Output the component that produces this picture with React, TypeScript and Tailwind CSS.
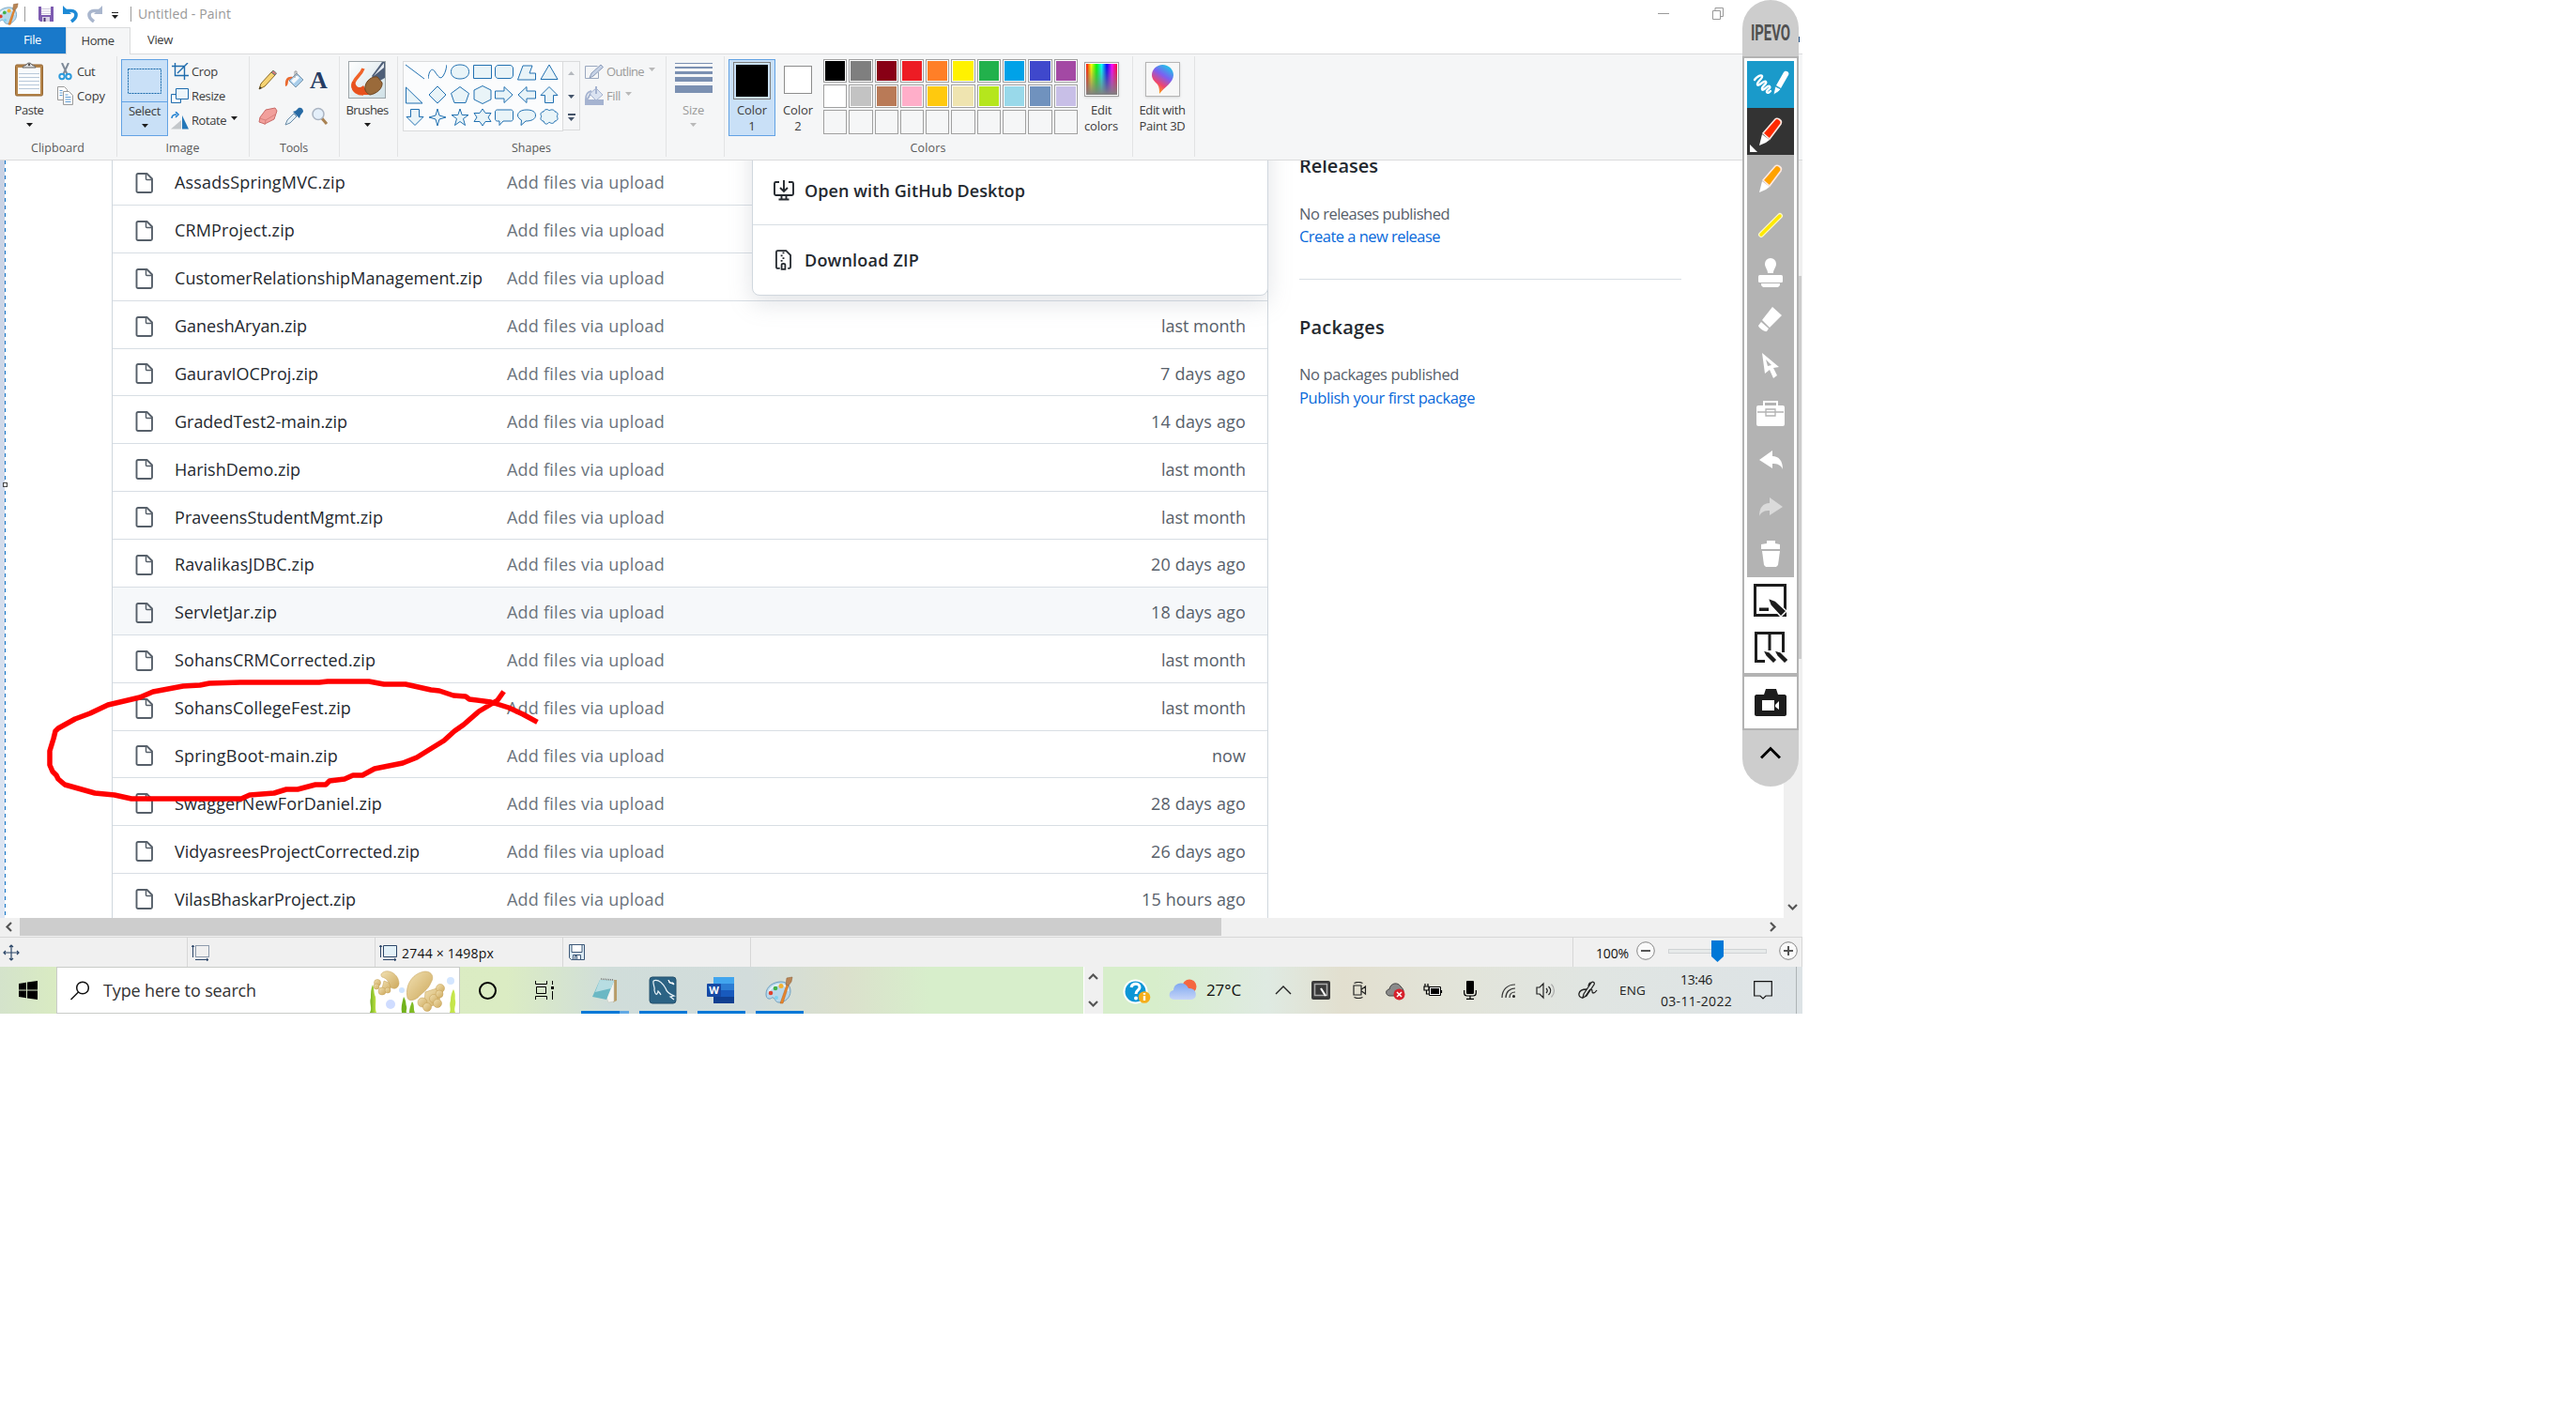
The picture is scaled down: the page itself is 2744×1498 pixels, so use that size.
import React, { useLayoutEffect, useRef, useState } from 'react';

type LabelProps = { w?: number; className?: string; children: string };

/* Single-line text whose letter spacing is adjusted so it spans `w` pixels. */
function Label({ w, className = '', children }: LabelProps) {
  const ref = useRef<HTMLSpanElement>(null);
  const [spacing, setSpacing] = useState(0);
  useLayoutEffect(() => {
    if (!ref.current || !w) return;
    const natural = ref.current.getBoundingClientRect().width;
    setSpacing((w - natural) / children.length);
  }, [w, children]);
  return (
    <span ref={ref} className={`inline-block whitespace-nowrap ${className}`} style={{ letterSpacing: spacing }}>
      {children}
    </span>
  );
}

const Caret = ({ className = 'text-[#1e1e1e]' }: { className?: string }) => (
  <svg width="7" height="4" viewBox="0 0 7 4" className={className}>
    <path d="M0 0h7L3.5 4z" fill="currentColor" />
  </svg>
);

/* ------------------------------------------------------------------ */
/* Title bar                                                           */
/* ------------------------------------------------------------------ */

const PaletteIcon = ({ size }: { size: number }) => (
  <svg width={size} height={size} viewBox="0 0 30 30">
    <path d="M1 19C1 11 9 6 17 6c6 0 10 4 10 10 0 7-6 12-12 12-4 0-4-3-6-5-2-1-3 2-5 1-2 0-3-2-3-5z" fill="#b9d8ea" stroke="#6f9fc0" strokeWidth="1" />
    <path d="M4 18c1-6 7-9 13-9 4 0 7 3 7 7" fill="none" stroke="#e6f4fb" strokeWidth="2" />
    <circle cx="6" cy="18" r="2.3" fill="#e0402e" />
    <circle cx="11" cy="13" r="2.3" fill="#43b049" />
    <circle cx="17" cy="10.500" r="2.500" fill="#f2b233" />
    <circle cx="12" cy="23" r="2" fill="#7fd2f0" />
    <path d="M16 29l7-20 2 1-6 19z" fill="#e8862c" stroke="#b7611a" strokeWidth=".5" />
    <path d="M22 9l1-7 6-1-1 5-3 4z" fill="#b98555" stroke="#8d5f35" strokeWidth=".5" />
  </svg>
);

function TitleBar() {
  return (
    <div className="flex h-[29px] items-center bg-white">
      <div className="flex h-full w-[26px] items-center"><div className="-ml-1"><PaletteIcon size={24} /></div></div>
      <div className="h-4 w-px bg-[#9b9b9b]" />
      <svg className="ml-[14px]" width="16" height="16" viewBox="0 0 16 16">
        <path d="M0 0h16v16H2l-2-2z" fill="#7d5bb0" />
        <path d="M3 0h10v9H3z" fill="#fff" />
        <path d="M3 2.500h10M3 5h10M3 7.500h10" stroke="#cfc7dd" />
        <path d="M4 11h8v5H4z" fill="#d9d2e6" /><path d="M5.500 12h2v4h-2z" fill="#4b3474" />
      </svg>
      <svg className="ml-[10px]" width="16" height="18" viewBox="0 0 16 18">
        <path d="M2 5.500h7c3 0 5 2 5 4.500 0 3-2 5-5 7" fill="none" stroke="#1e8ad6" strokeWidth="3.600" />
        <path d="M0 0v9h9z" fill="#1e8ad6" />
      </svg>
      <svg className="ml-[10px]" width="16" height="18" viewBox="0 0 16 18">
        <path d="M14 5.500H7C4 5.500 2 7.500 2 10c0 3 2 5 5 7" fill="none" stroke="#a9b6cd" strokeWidth="3.600" />
        <path d="M16 0v9H7z" fill="#a9b6cd" />
      </svg>
      <div className="ml-[10px] mt-1 flex flex-col items-center gap-[2px]"><div className="h-px w-[7px] bg-[#222]" /><Caret /></div>
      <div className="ml-[13px] h-4 w-px bg-[#9b9b9b]" />
      <Label w={99} className="ml-[7px] text-[14px] leading-[29px] text-[#999999]">Untitled - Paint</Label>
      <div className="ml-[1520px] h-px w-[12px] bg-[#999]" />
      <svg className="ml-[46px]" width="12" height="13" viewBox="0 0 12 13" fill="none" stroke="#999">
        <path d="M.5 3.500h8v9h-8zM3 3V.500h8.500v9H9" />
      </svg>
    </div>
  );
}

function Tabs() {
  return (
    <div className="flex h-[29px] border-b border-[#dadbdc] bg-white">
      <div className="flex w-[70px] items-center justify-center bg-[#1979ca] pr-px text-[13px] text-white"><Label w={19}>File</Label></div>
      <div className="-mb-px flex h-[29px] w-[69px] items-center justify-center border border-b-0 border-[#dadbdc] bg-[#f5f6f7] pr-px text-[13px] text-[#3c3c3c]"><Label w={35}>Home</Label></div>
      <div className="flex w-[63px] items-center justify-center text-[13px] text-[#3c3c3c]"><Label w={27}>View</Label></div>
    </div>
  );
}

/* ------------------------------------------------------------------ */
/* Ribbon                                                              */
/* ------------------------------------------------------------------ */

function Group({ width, label, labelWidth, children }: { width: string; label?: string; labelWidth?: number; children: React.ReactNode }) {
  return (
    <div className={`flex shrink-0 flex-col pt-[2px] ${width}`}>
      <div className="flex h-[107px] flex-col border-r border-[#e2e3e4]">
        <div className="-mt-[2px] flex h-[93px]">{children}</div>
        <div className="pr-px text-center text-[12.500px] leading-[18px] text-[#5a5a5a]">{label && <Label w={labelWidth}>{label}</Label>}</div>
      </div>
    </div>
  );
}

const ribbonText = 'text-[13px] leading-[17px] text-[#3c3c3c]';

function ClipboardGroup() {
  return (
    <Group width="w-[125px]" label="Clipboard" labelWidth={57}>
      <div className="ml-[11px] flex w-10 flex-col items-center pt-[8px]">
        <svg width="32" height="38" viewBox="0 0 32 38">
          <rect x="1.500" y="3" width="29" height="33" rx="1.500" fill="#b5854a" stroke="#946530" />
          <path d="M4 6h24v28H4z" fill="#f9fbfd" />
          <path d="M5 12.500h22M5 16.500h22M5 20.500h22M5 24.500h22M5 28.500h22" stroke="#b9c9da" />
          <path d="M9 6c0-2 3-2 4-3 1-2.500 5-2.500 6 0 1 1 4 1 4 3z" fill="#e4e4e4" stroke="#5b5b5b" />
          <circle cx="16" cy="3" r="1.300" fill="#555" />
        </svg>
        <Label w={31} className={`mt-[5px] ${ribbonText}`}>Paste</Label>
        <div className="mt-[5px]"><Caret /></div>
      </div>
      <div className="flex flex-col pl-[10px] pt-[5px]">
        <div className="flex h-[26px] items-center gap-[4px]">
          <svg width="17" height="19" viewBox="0 0 17 19">
            <path d="M5 0l5.500 12M12 0L6.500 12" stroke="#7f8b99" strokeWidth="2" />
            <circle cx="5" cy="14.500" r="2.700" fill="none" stroke="#2e9bdc" strokeWidth="2" />
            <circle cx="12" cy="14.500" r="2.700" fill="none" stroke="#2e9bdc" strokeWidth="2" />
          </svg>
          <Label w={19} className={ribbonText}>Cut</Label>
        </div>
        <div className="flex h-[26px] items-center gap-[4px]">
          <svg width="17" height="20" viewBox="0 0 17 20" fill="#fff" stroke="#9a9a9a">
            <path d="M.500.500h7l3 3v11H.500z" /><path d="M6.500 5.500h6l4 4v10h-10z" />
            <path d="M2.500 4.500h3M2.500 7h3M2.500 9.500h3M8.500 9h3M8.500 11.500h6M8.500 14h6M8.500 16.500h6" stroke="#5b9bd5" />
          </svg>
          <Label w={30} className={ribbonText}>Copy</Label>
        </div>
      </div>
    </Group>
  );
}

function ImageGroup() {
  return (
    <Group width="w-[141px]" label="Image" labelWidth={36}>
      <div className="ml-1 mt-[5px] flex h-[82px] w-[50px] flex-col items-center border border-[#62a2e4] bg-[#c9e0f7]">
        <div className="flex h-[45px] w-full items-center justify-center border-b border-[#62a2e4]">
          <svg width="36" height="27" viewBox="0 0 36 27"><rect x=".5" y=".5" width="35" height="26" fill="none" stroke="#1467a8" strokeDasharray="2 1" /></svg>
        </div>
        <Label w={34} className={`mt-px ${ribbonText}`}>Select</Label>
        <div className="mt-[5px]"><Caret /></div>
      </div>
      <div className="flex flex-col pl-[3px] pt-[5px]">
        <div className="flex h-[26px] items-center gap-[3px]">
          <svg width="19" height="18" viewBox="0 0 19 18" fill="none" stroke="#1f6cad" strokeWidth="1.400"><path d="M4.500 0v13.500H19M1 3.500h13.500V18M7 11l8-8 3-3" /></svg>
          <Label w={28} className={ribbonText}>Crop</Label>
        </div>
        <div className="flex h-[26px] items-center gap-[3px]">
          <svg width="19" height="18" viewBox="0 0 19 18" fill="#fff" stroke="#1f6cad"><path d="M.5 7.500h10v9H.5z" /><path d="M5.500 1.500h13v11h-13z" fill="#eef6fb" /></svg>
          <Label w={36} className={ribbonText}>Resize</Label>
        </div>
        <div className="flex h-[26px] items-center gap-[3px]">
          <svg width="19" height="19" viewBox="0 0 19 19"><path d="M0 18.500L11 9v9.500z" fill="#c3c7ca" /><path d="M12 4l7 14.500h-7z" fill="#2477b8" /><path d="M1 7c0-3 2-4 5-4M5 0l3 3-3 3" fill="none" stroke="#1f7fd0" strokeWidth="1.500" /></svg>
          <Label w={37} className={ribbonText}>Rotate</Label>
          <div className="ml-[2px] -mt-[4px]"><Caret /></div>
        </div>
      </div>
    </Group>
  );
}

function ToolsGroup() {
  return (
    <Group width="w-[96px]" label="Tools" labelWidth={30}>
      <div className="ml-[9px] mt-[17px] grid h-[60px] grid-cols-[28px_28px_20px] gap-y-[15px]">
        <svg width="20" height="21" viewBox="0 0 20 21"><path d="M1 20l2-6L14 2l4 3L7 17z" fill="#f6d373" stroke="#8a6a26" /><path d="M14 2l2-2 3.500 3L18 5z" fill="#d9777c" stroke="#6c7d6c" /><path d="M1 20l1-3 2 2z" fill="#333" /></svg>
        <svg width="21" height="21" viewBox="0 0 21 21"><path d="M5 11l8-8 7 7-8 8z" fill="#a8cdea" stroke="#7c97ad" /><path d="M7 11l6-6 3 3-6 6z" fill="#f5fafd" /><path d="M11 8V1h2v5" fill="none" stroke="#999" /><path d="M9 7c-5-1-9 1-8 10 2 0 3-3 3-6z" fill="#ea6a30" /></svg>
        <div className="-ml-px font-['Liberation_Serif'] text-[26px] font-bold leading-[22px] text-[#263c63]">A</div>
        <svg width="21" height="20" viewBox="0 0 21 20"><path d="M8 3l10-2 2 3-3 9-10 5-6-2 1-5z" fill="#f2a09c" stroke="#c96b68" /><path d="M1 12l7 2-1 5M8 14l10-6" fill="none" stroke="#d9817d" /></svg>
        <svg width="20" height="20" viewBox="0 0 20 20"><path d="M1 19l2-5 7-7 3 3-7 7z" fill="#e5f0f7" stroke="#688aa6" /><path d="M9 5l7 7 1-3 3-4c0-3-2-5-5-4l-3 3z" fill="#276aa4" /></svg>
        <svg width="20" height="20" viewBox="0 0 20 20"><path d="M11 11l6 7" stroke="#a98253" strokeWidth="3" /><circle cx="8" cy="7.500" r="6" fill="#e4effa" stroke="#aab4c2" strokeWidth="1.500" /></svg>
      </div>
    </Group>
  );
}

function BrushesGroup() {
  return (
    <Group width="w-[62px]">
      <div className="ml-[4px] flex w-[50px] flex-col items-center pt-[7px]">
        <svg width="40" height="40" viewBox="0 0 40 40">
          <defs><linearGradient id="brushBg" x1="0" y1="0" x2="1" y2="1"><stop offset="0" stopColor="#fff" /><stop offset="1" stopColor="#cfe0e6" /></linearGradient></defs>
          <rect x=".5" y=".5" width="39" height="39" fill="url(#brushBg)" stroke="#9da5a9" />
          <path d="M25 16L36 1h3v17l-9 5z" fill="#4f5f78" /><path d="M27 16L38 2v5z" fill="#e6ecf3" />
          <path d="M16 8C13 16 6 18 5 26c0 6 5 9 11 9" fill="none" stroke="#f0632a" strokeWidth="3.500" />
          <path d="M4 22c-3 8 3 14 12 14h6l-6-10c-4 4-8 2-9-4z" fill="#e8521f" />
          <path d="M18 27c1-6 7-11 13-10l5 6c1 6-6 12-13 13-4-2-6-5-5-9z" fill="#9a6a3a" stroke="#6e4722" />
        </svg>
        <Label w={45} className={`mt-[4px] ${ribbonText}`}>Brushes</Label>
        <div className="mt-[5px]"><Caret /></div>
      </div>
    </Group>
  );
}

/* Each shape is drawn in a 20 x 20 cell. */
const shapePaths = [
  'M0 2L20 17',
  'M0 17C1 8 4 5 7 9c4 6 6 9 9 5 3-5 3-7 4-12',
  'M10 2C4 2 .500 5 .500 9.500S4 17 10 17s9.500-3 9.500-7.500S16 2 10 2z',
  'M.500 2.500h19v14H.500z',
  'M4 2.500h12c2 0 3.500 1.500 3.500 3.500v7c0 2-1.500 3.500-3.500 3.500H4C2 16.500.500 15 .500 13V6C.500 4 2 2.500 4 2.500z',
  'M6 3h10l-3 8h6.500v7H.500z',
  'M10 2l9 15.500H1z',
  'M.500 2v17H18z',
  'M10 1l9 9-9 9-9-9z',
  'M10 1.500l9.500 7-3.500 10H4L.500 8.500z',
  'M10 .500L19 5v10l-9 4.500L1 15V5z',
  'M.500 6H10V1.500l9 8.500-9 8.500V14H.500z',
  'M19.500 6H10V1.500L1 10l9 8.500V14h9.500z',
  'M10 1.500l9 9h-4.500v8h-9v-8H1z',
  'M5.500 1.500h9v8H19l-9 9-9-9h4.500z',
  'M10 1l2 7 7 2-7 2-2 7-2-7-7-2 7-2z',
  'M10 1l2.200 6.500H19l-5.500 4L15.500 18.500 10 14.500l-5.500 4 2-7L1 7.500h6.800z',
  'M10 1l3 4.500h6L16 10l3 4.500h-6L10 19l-3-4.500H1L4 10 1 5.500h6z',
  'M2.500 2h15c1 0 2 1 2 2v8c0 1-1 2-2 2H9l-4 4.500V14H2.500c-1 0-2-1-2-2V4c0-1 1-2 2-2z',
  'M10 2C4 2 .500 4.500 .500 8c0 2 2 4 4 5l-.500 5.500L9 14c6 0 10.500-2 10.500-6S16 2 10 2z',
  'M4 4c1-3 5-3 6-1 2-2 6-1 6 1 3 0 4 3 2 5 2 2 1 5-2 5-1 3-4 3-6 1-1 2-4 3-5 1l-1-2c-3 0-4-3-2-5-2-2-1-5 2-5z',
];

function ShapesGroup() {
  return (
    <Group width="w-[286px]" label="Shapes" labelWidth={42}>
      <div className="ml-[5px] mt-[7px] flex h-[75px]">
        <div className="grid w-[171px] grid-cols-7 content-start justify-items-start gap-y-[4px] border border-[#dadbdc] bg-[#fbfcfd] pl-[2px] pt-[1px]">
          {shapePaths.map((d, i) => (
            <svg key={i} width="20" height="20" viewBox="0 0 20 20" fill={i < 2 ? 'none' : '#e9f4f8'} stroke="#2271b1" strokeWidth="1"><path d={d} /></svg>
          ))}
        </div>
        <div className="flex h-[74px] w-[18px] flex-col items-center border border-l-0 border-[#dadbdc] pt-[10px]">
          <div className="rotate-180"><Caret className="text-[#b4b8bd]" /></div>
          <div className="mt-[21px]"><Caret className="text-[#44546a]" /></div>
          <div className="mt-[16px] flex flex-col items-center gap-[2px]"><div className="h-[2px] w-2 bg-[#44546a]" /><Caret className="text-[#44546a]" /></div>
        </div>
      </div>
      <div className="ml-[5px] flex flex-col pt-[5px]">
        <div className="flex h-[26px] items-center gap-[3px]">
          <svg width="20" height="17" viewBox="0 0 20 17"><path d="M.5 2.500h13M.5 2.500v13h14V9" fill="none" stroke="#9aa8bf" /><path d="M5 15l2-5L17 1l2.500 2.500L9 13z" fill="#c6d2e6" stroke="#8b9bb8" /></svg>
          <Label w={40} className="text-[13px] leading-[17px] text-[#9a9a9a]">Outline</Label>
          <div className="ml-[2px] -mt-[4px]"><Caret className="text-[#b9b9b9]" /></div>
        </div>
        <div className="flex h-[26px] items-center gap-[3px]">
          <svg width="20" height="20" viewBox="0 0 20 20"><path d="M0 14h20v6H0z" fill="#a5b3d0" /><path d="M5 8l7-6 7 7-7 6z" fill="#dbe3f1" stroke="#a5b3d0" /><path d="M7 5c-5 1-6 4-6 9 3 0 3-4 5-6M12 8V0" fill="none" stroke="#a5b3d0" strokeWidth="2" /></svg>
          <Label w={15} className="text-[13px] leading-[17px] text-[#9a9a9a]">Fill</Label>
          <div className="ml-[2px] -mt-[4px]"><Caret className="text-[#b9b9b9]" /></div>
        </div>
      </div>
    </Group>
  );
}

function SizeGroup() {
  return (
    <Group width="w-[62px]">
      <div className="-ml-[2px] flex w-full flex-col items-center pt-[9px]">
        <div className="h-px w-10 bg-[#7b90b2]" />
        <div className="mt-[3px] h-[2px] w-10 bg-[#7b90b2]" />
        <div className="mt-[3px] h-[3px] w-10 bg-[#7b90b2]" />
        <div className="mt-[3px] h-[5px] w-10 bg-[#7b90b2]" />
        <div className="mt-[4px] h-[8px] w-10 bg-[#7b90b2]" />
        <Label w={23} className="mt-[10px] text-[13px] leading-[17px] text-[#9a9a9a]">Size</Label>
        <div className="mt-[5px]"><Caret className="text-[#b9b9b9]" /></div>
      </div>
    </Group>
  );
}

const palette = [
  'bg-black', 'bg-[#7f7f7f]', 'bg-[#880015]', 'bg-[#ed1c24]', 'bg-[#ff7f27]', 'bg-[#fff200]', 'bg-[#22b14c]', 'bg-[#00a2e8]', 'bg-[#3f48cc]', 'bg-[#a349a4]',
  'bg-white', 'bg-[#c3c3c3]', 'bg-[#b97a57]', 'bg-[#ffaec9]', 'bg-[#ffc90e]', 'bg-[#efe4b0]', 'bg-[#b5e61d]', 'bg-[#99d9ea]', 'bg-[#7092be]', 'bg-[#c8bfe7]',
];

function ColorsGroup() {
  return (
    <Group width="w-[435px]" label="Colors" labelWidth={38}>
      <div className="ml-[4px] mt-[5px] flex h-[82px] w-[50px] flex-col items-center border border-[#62a2e4] bg-[#c9e0f7] pt-[2px]">
        <div className="h-10 w-10 border border-[#7f7f7f] p-[2px]"><div className="h-full w-full bg-black" /></div>
        <Label w={32} className={`mt-[3px] ${ribbonText}`}>Color</Label>
        <Label className={ribbonText}>1</Label>
      </div>
      <div className="flex w-[48px] flex-col items-center pt-[12px]">
        <div className="h-[30px] w-[30px] border border-[#8d8d8d] bg-white" />
        <Label w={32} className={`mt-[9px] ${ribbonText}`}>Color</Label>
        <Label className={ribbonText}>2</Label>
      </div>
      <div className="ml-[3px] mt-[5px] grid h-[80px] w-[271px] grid-cols-10 gap-x-[2px] gap-y-[2px]">
        {palette.map((c) => (
          <div key={c} className="h-[25px] border border-[#a0a0a0] bg-white p-px"><div className={`h-full w-full ${c}`} /></div>
        ))}
        {Array.from({ length: 10 }, (_, i) => <div key={i} className="h-[26px] border border-[#a0a0a0] bg-[#f5f6f7]" />)}
      </div>
      <div className="flex w-[50px] flex-col items-center pt-[8px]">
        <div className="h-[37px] w-[37px] border border-[#a0a0a0] bg-white p-px shadow-sm">
          <div className="h-full w-full bg-[linear-gradient(to_right,#f00,#ff0,#0f0,#0ff,#00f,#f0f,#f03)]"><div className="h-full w-full bg-[linear-gradient(to_bottom,transparent,#808080)]" /></div>
        </div>
        <Label w={22} className={`mt-[6px] ${ribbonText}`}>Edit</Label>
        <Label w={36} className={ribbonText}>colors</Label>
      </div>
    </Group>
  );
}

function Paint3DGroup() {
  return (
    <Group width="w-[66px]">
      <div className="-ml-[2px] flex w-[66px] flex-col items-center pt-[8px]">
        <div className="flex h-[37px] w-[37px] items-center justify-center border border-[#b5b5b5] bg-[#f7f7f7] shadow-sm">
          <svg width="23" height="31" viewBox="0 0 23 31">
            <defs>
              <linearGradient id="p3d" x1=".8" y1="0" x2=".3" y2="1"><stop offset="0" stopColor="#12d2e8" /><stop offset=".4" stopColor="#7d5ff0" /><stop offset=".7" stopColor="#ee4470" /><stop offset="1" stopColor="#ffb000" /></linearGradient>
            </defs>
            <path d="M11.500 0C18 0 23 5 23 11c0 8-10 13-15 20 0-4 0-7-2-10-3-3-6-6-6-10C0 5 5 0 11.500 0z" fill="url(#p3d)" />
          </svg>
        </div>
        <Label w={49} className={`mt-[6px] ${ribbonText}`}>Edit with</Label>
        <Label w={49} className={ribbonText}>Paint 3D</Label>
      </div>
    </Group>
  );
}

function Ribbon() {
  return (
    <div className="flex h-[113px] border-b border-[#dadbdc] bg-[#f5f6f7]">
      <ClipboardGroup /><ImageGroup /><ToolsGroup /><BrushesGroup /><ShapesGroup /><SizeGroup /><ColorsGroup /><Paint3DGroup />
    </div>
  );
}

/* ------------------------------------------------------------------ */
/* Canvas with the repository page                                     */
/* ------------------------------------------------------------------ */

type FileRow = { name: string; w: number; age: string; aw: number; hover?: boolean };

const files: FileRow[] = [
  { name: 'AssadsSpringMVC.zip', w: 182, age: '', aw: 0 },
  { name: 'CRMProject.zip', w: 128, age: '', aw: 0 },
  { name: 'CustomerRelationshipManagement.zip', w: 328, age: '', aw: 0 },
  { name: 'GaneshAryan.zip', w: 141, age: 'last month', aw: 90 },
  { name: 'GauravIOCProj.zip', w: 153, age: '7 days ago', aw: 91 },
  { name: 'GradedTest2-main.zip', w: 184, age: '14 days ago', aw: 101 },
  { name: 'HarishDemo.zip', w: 134, age: 'last month', aw: 90 },
  { name: 'PraveensStudentMgmt.zip', w: 222, age: 'last month', aw: 90 },
  { name: 'RavalikasJDBC.zip', w: 149, age: '20 days ago', aw: 101 },
  { name: 'ServletJar.zip', w: 109, age: '18 days ago', aw: 101, hover: true },
  { name: 'SohansCRMCorrected.zip', w: 214, age: 'last month', aw: 90 },
  { name: 'SohansCollegeFest.zip', w: 188, age: 'last month', aw: 90 },
  { name: 'SpringBoot-main.zip', w: 174, age: 'now', aw: 36 },
  { name: 'SwaggerNewForDaniel.zip', w: 221, age: '28 days ago', aw: 101 },
  { name: 'VidyasreesProjectCorrected.zip', w: 261, age: '26 days ago', aw: 101 },
  { name: 'VilasBhaskarProject.zip', w: 193, age: '15 hours ago', aw: 111 },
];

const FileIcon = () => (
  <svg width="19" height="22" viewBox="0 0 19 22" fill="none" stroke="#57606a" strokeWidth="1.900" strokeLinejoin="round">
    <path d="M3 1h9.500L18 6.500V19.500a1.500 1.500 0 0 1-1.500 1.500H3a1.500 1.500 0 0 1-1.500-1.500v-17A1.500 1.500 0 0 1 3 1z" />
    <path d="M11.500 1v5.500a1 1 0 0 0 1 1H18" strokeWidth="1.500" />
  </svg>
);

function FileTable() {
  return (
    <div className="-mt-[3px] w-[1232px] shrink-0 border-x border-[#d0d7de]">
      {files.map((f) => (
        <div key={f.name} className={`flex h-[50.880px] items-center border-b border-[#d8dee4] pl-[24px] pr-[23px] pt-[4px] text-[18px] ${f.hover ? 'bg-[#f6f8fa]' : ''}`}>
          <FileIcon />
          <div className="ml-[23px] w-[354px] text-[#24292f]"><Label w={f.w}>{f.name}</Label></div>
          <div className="flex-1 text-[#6b737c]"><Label w={168}>Add files via upload</Label></div>
          <div className="text-[#57606a]">{f.age && <Label w={f.aw}>{f.age}</Label>}</div>
        </div>
      ))}
    </div>
  );
}

function Sidebar() {
  return (
    <div className="ml-[33px] flex w-[407px] shrink-0 flex-col items-start text-[16.500px] leading-[25px] text-[#57606a]">
      <Label w={84} className="-mt-[7px] text-[20px] font-semibold text-[#24292f]">Releases</Label>
      <Label w={160} className="mt-[26px]">No releases published</Label>
      <Label w={150} className="-mt-px text-[#0969da]">Create a new release</Label>
      <div className="mt-[33px] h-px w-full bg-[#d8dee4]" />
      <Label w={91} className="mt-[38px] text-[20px] font-semibold text-[#24292f]">Packages</Label>
      <Label w={170} className="mt-[25px]">No packages published</Label>
      <Label w={187} className="text-[#0969da]">Publish your first package</Label>
    </div>
  );
}

function CodeMenu() {
  return (
    <div className="absolute left-[801px] top-[-40px] flex h-[184px] w-[550px] flex-col rounded-lg border border-[#d0d7de] bg-white text-[18px] font-semibold text-[#24292f] shadow-[0_8px_24px_rgba(140,149,159,0.25)]">
      <div className="flex h-[108px] items-center border-b border-[#d8dee4] pl-[22px] pt-[36px]">
        <svg width="22" height="22" viewBox="0 0 22 22" fill="none" stroke="#24292f" strokeWidth="1.900">
          <path d="M6 2H2.500A1.500 1.500 0 0 0 1 3.500v11A1.500 1.500 0 0 0 2.500 16h17a1.500 1.500 0 0 0 1.500-1.500v-11A1.500 1.500 0 0 0 19.500 2H16M11 0v11M7 8l4 4 4-4M8.500 16v3.500M13.500 16v3.500M5.500 20.500h11" />
        </svg>
        <Label w={235} className="ml-[11px]">Open with GitHub Desktop</Label>
      </div>
      <div className="flex h-[75px] items-center pl-[24px] pt-[1px]">
        <svg width="17" height="22" viewBox="0 0 18 23" fill="none" stroke="#24292f" strokeWidth="1.900">
          <path d="M5 21H2.500A1.500 1.500 0 0 1 1 19.500v-17A1.500 1.500 0 0 1 2.500 1H12l5 5v13.500a1.500 1.500 0 0 1-1.500 1.500H14M8 3.500h2M6 6.500h2M8 9.500h2M6 12.500h2M7 22v-5c0-2 4-2 4 0v5z" />
        </svg>
        <Label w={122} className="ml-[14px]">Download ZIP</Label>
      </div>
    </div>
  );
}

const RedStroke = () => (
  <svg className="absolute left-0 top-[540px]" width="620" height="160" viewBox="0 711 620 160" fill="none" stroke="#ff0000" strokeWidth="5.500" strokeLinejoin="round" strokeLinecap="square">
    <path d="M535 739L530 746 510 758 494 772 484 779 473 789 452 802 444 807 429 813 399 819 386 826 376 826 367 830 351 832 347 836 336 836 317 841 305 841 292 845 266 847 257 851 140 851 122 847 101 845 69 836 62 830 60 826 56 822 53 815 53 800 57 787 59 779 62 776 80 766 96 760 115 751 149 743 163 737 195 731 213 730 223 728 257 727 340 727 349 726 393 726 409 729 432 729 459 735 468 736 483 741 496 742 500 745 523 748 542 754 557 761 570 768" />
  </svg>
);

const Chevron = ({ d, className = '' }: { d: string; className?: string }) => (
  <svg className={className} width="11" height="11" viewBox="0 0 11 11" fill="none" stroke="#555" strokeWidth="2.200"><path d={d} /></svg>
);

function Workspace() {
  return (
    <div className="flex h-[807px]">
      <div className="relative flex w-[1900px] overflow-hidden bg-white">
        <div className="flex w-[119px] shrink-0">
          <div className="h-full w-[5px] bg-gradient-to-b from-[#c8d1e3] to-[#dfe7f3]" />
          <div className="h-full w-px bg-[repeating-linear-gradient(to_bottom,#0f72c4_0_4px,#fff_4px_8px)]" />
        </div>
        <FileTable />
        <Sidebar />
        <CodeMenu />
        <RedStroke />
        <div className="absolute left-[3px] top-[343px] h-[5px] w-[5px] border border-[#444] bg-white" />
      </div>
      <div className="flex w-5 flex-col items-center bg-[#f0f0f0]">
        <div className="mt-[123px] h-[408px] w-[18px] bg-[#cdcdcd]" />
        <Chevron d="M1 3l4.500 4.500L10 3" className="mt-auto mb-[6px] -ml-px" />
      </div>
    </div>
  );
}

function HorizontalScroll() {
  return (
    <div className="flex h-5 items-center bg-[#f0f0f0] pb-px">
      <Chevron d="M8 1L3.500 5.500 8 10" className="ml-[4px] mr-[6px]" />
      <div className="h-[19px] w-[1280px] bg-[#cdcdcd]" />
      <Chevron d="M3 1l4.500 4.500L3 10" className="ml-[582px]" />
    </div>
  );
}

/* ------------------------------------------------------------------ */
/* Status bar                                                          */
/* ------------------------------------------------------------------ */

const ZoomButton = ({ plus }: { plus?: boolean }) => (
  <svg width="20" height="20" viewBox="0 0 20 20"><circle cx="10" cy="10" r="9.300" fill="#fafafa" stroke="#858585" /><path d={plus ? 'M5 10h10M10 5v10' : 'M5 10h10'} stroke="#555" strokeWidth="2" /></svg>
);

function StatusBar() {
  return (
    <div className="flex h-8 border-t border-[#d7d7d7] bg-[#f0f0f0] text-[14px] text-[#111]">
      <div className="flex w-[200px] items-center border-r border-[#d7d7d7] pl-[3px]">
        <svg width="18" height="18" viewBox="0 0 18 18" fill="none" stroke="#2c4668" strokeWidth="1.200"><path d="M9 1v16M1 9h16M7 3l2-2 2 2M7 15l2 2 2-2M3 7L1 9l2 2M15 7l2 2-2 2" /></svg>
      </div>
      <div className="flex w-[200px] items-center border-r border-[#d7d7d7] pl-[4px]">
        <svg width="20" height="18" viewBox="0 0 20 18" fill="none" stroke="#2c4668"><path d="M4.500 1.500h14v12h-14z" strokeDasharray="1 1" /><path d="M1.500 1v13M0 3l1.500-2L3 3M4 16.500h14M16 15l2 1.500-2 1.500" /></svg>
      </div>
      <div className="flex w-[200px] items-center border-r border-[#d7d7d7] pl-[4px]">
        <svg width="20" height="18" viewBox="0 0 20 18" fill="none" stroke="#2c4668"><path d="M4.500 1.500h14v12h-14z" fill="#e3f1f8" /><path d="M1.500 1v13M0 3l1.500-2L3 3M4 16.500h14M16 15l2 1.500-2 1.500" /></svg>
        <Label w={98} className="ml-[4px] pt-px">2744 × 1498px</Label>
      </div>
      <div className="flex w-[200px] items-center border-r border-[#d7d7d7] pl-[6px]">
        <svg width="17" height="17" viewBox="0 0 17 17" fill="#dcebf4" stroke="#3d5878"><path d="M.5.5h16v16h-14l-2-2z" /><path d="M3 .5h11v8H3z" fill="#fff" /><path d="M4.500 11.500h8v5h-8z" fill="#fff" /><path d="M6.500 12.500h2v4h-2z" /></svg>
      </div>
      <div className="w-[876px] border-r border-[#d7d7d7]" />
      <div className="flex w-[244px] items-center border-r border-[#d7d7d7]">
        <Label w={35} className="ml-[24px] pt-px">100%</Label>
        <div className="ml-[8px] -mt-[3px]"><ZoomButton /></div>
        <div className="ml-[14px] -mt-[3px] flex h-[24px] items-center">
          <div className="h-[5px] w-[46px] border border-r-0 border-[#d0d3d5] bg-[#e7eaea]" />
          <svg width="13" height="23" viewBox="0 0 13 23"><path d="M0 0h13v17l-6.500 6L0 17z" fill="#0078d7" /></svg>
          <div className="h-[5px] w-[46px] border border-l-0 border-[#d0d3d5] bg-[#e7eaea]" />
        </div>
        <div className="ml-[13px] -mt-[3px]"><ZoomButton plus /></div>
      </div>
    </div>
  );
}

/* ------------------------------------------------------------------ */
/* Taskbar                                                             */
/* ------------------------------------------------------------------ */

const Mushrooms = () => (
  <svg width="93" height="46" viewBox="0 0 93 46">
    <defs>
      <linearGradient id="cap" x1="0" y1="0" x2="1" y2="1"><stop offset="0" stopColor="#f1e0b2" /><stop offset="1" stopColor="#cda95c" /></linearGradient>
      <linearGradient id="weed" x1="0" y1="0" x2="1" y2="0"><stop offset="0" stopColor="#6fb01a" /><stop offset="1" stopColor="#c9e84e" /></linearGradient>
    </defs>
    <g fill="url(#weed)">
      <path d="M1 46c3-5-1-10 1-16 0-5 0-9 2-14 2 6 1 9 3 13 1 6-1 12 1 17z" />
      <path d="M35 46c-1-5 0-10 2-17 3 5 2 7 3 10 1 3-1 5 0 7zM43 46c0-4 1-7 3-12 3 4 1 8 3 12zM86 46c2-5-1-7 1-13 0-5 1-8 3-12 3 6 1 9 2 12 1 5-2 8 0 13z" />
    </g>
    <g fill="url(#cap)" stroke="#c29c50" strokeWidth=".5">
      <path d="M16 12l8 3-2 8-9 1z" /><circle cx="9" cy="14" r="3.500" /><circle cx="8" cy="18" r="3" /><circle cx="14" cy="23" r="4" /><circle cx="20" cy="22" r="3" />
      <path d="M15 3c6-4 17 2 17 12-1 6-6 6-9 4-1-5-4-10-9-11-2-2-1-4 1-5z" />
      <path d="M60 24l12-4 6 2-4 14-10 4-5-6z" /><circle cx="57" cy="35" r="5" /><circle cx="62" cy="40" r="4.500" /><circle cx="69" cy="31" r="4.500" /><circle cx="73" cy="36" r="4.500" /><circle cx="76" cy="20" r="4.500" /><circle cx="75" cy="26" r="4" />
      <path d="M41 30C38 15 48 3 60 2c7 0 10 6 6 12-3 8-11 12-14 16-4 3-10 4-11 0z" />
    </g>
    <circle cx="35" cy="22" r="3" fill="#cfe4ff" /><circle cx="23" cy="37" r="5" fill="#cfdcff" /><circle cx="87" cy="12" r="4" fill="#d3e6ff" />
  </svg>
);

function TaskButton({ margin, split, children }: { margin?: string; split?: boolean; children: React.ReactNode }) {
  return (
    <div className={`flex w-[51px] flex-col items-center ${margin ?? ''}`}>
      <div className="flex h-[47px] items-center justify-center pr-px pt-[2px]">{children}</div>
      <div className="flex h-[3px] w-full bg-[#0078d7]">{split && <div className="ml-auto h-full w-[10px] bg-[#62a9e4]" />}</div>
    </div>
  );
}

function Taskbar() {
  return (
    <div className="flex h-[50px] bg-[linear-gradient(to_right,#d4e3cb_0,#d9ebc2_60px,#dbecc3_540px,#d0ddda_650px,#d2dcdb_800px,#dbe0cc_900px,#d7eecb_990px,#d7eecb_1230px,#dfeae2_1350px,#e2dfcf_1430px,#e2e4da_1560px,#e0e5e2_1700px,#dde3e6_1920px)]">
      <div className="flex w-[60px] items-center justify-center">
        <svg width="20" height="20" viewBox="0 0 20 20"><path d="M0 3l8-1.200V9.500H0zM9 1.600L20 0v9.500H9zM0 10.500h8v7.700L0 17zM9 10.500h11V20L9 18.400z" fill="#000" /></svg>
      </div>
      <div className="flex w-[430px] items-center border border-[#c9cbc8] bg-white">
        <svg className="ml-[14px]" width="20" height="21" viewBox="0 0 20 21" fill="none" stroke="#111" strokeWidth="1.500"><circle cx="13" cy="7.500" r="6.300" /><path d="M8.500 12L.5 20" /></svg>
        <Label w={163} className="ml-[15px] text-[18px] text-[#333]">Type here to search</Label>
        <div className="ml-auto mr-[3px] mt-[2px] h-[46px]"><Mushrooms /></div>
      </div>
      <div className="flex w-[60px] items-center justify-center pr-px"><div className="h-[19px] w-[19px] rounded-full border-[2.500px] border-black" /></div>
      <div className="flex w-[60px] items-center justify-center">
        <svg width="20" height="20" viewBox="0 0 20 20" fill="none" stroke="#000"><path d="M.5 0v3.500h12V0M.5 20v-3.500h12V20M1.500 6.500h10v7h-10zM18.500 0v4M18.500 11v9" /><path d="M17 6h3v3h-3z" fill="#000" stroke="none" /></svg>
      </div>
      <TaskButton margin="ml-[9px]" split>
        <svg width="28" height="28" viewBox="0 0 28 28"><path d="M24 3h3v22l-4 2z" fill="#b89c66" /><path d="M10 3l14 1v22l-6 1z" fill="#f4f4f0" stroke="#c2c2b8" strokeWidth=".5" /><path d="M9 3l15 1-8 20-15-3z" fill="#6bb8c4" /><path d="M9 3l15 1-3 8L4 16z" fill="#b7dde2" /><path d="M10 2l14 1" stroke="#777" strokeWidth="1.500" strokeDasharray="1 1" /></svg>
      </TaskButton>
      <TaskButton margin="ml-[11px]">
        <svg width="30" height="30" viewBox="0 0 30 30"><rect x="1" y="1" width="28" height="28" rx="3" fill="#2c6384" stroke="#24506d" /><path d="M5 5c5-2 10 3 13 8 1 4 4 6 9 8l-4 1 4 3M5 5c-1 4 2 6 1 10 1 5 3 6 4 1 2 2 3 4 3 4" fill="none" stroke="#e9f3f8" strokeWidth="1.200" /><path d="M21 4l2 3h3l1 2-2-1-3-1z" fill="#fff" stroke="#fff" /></svg>
      </TaskButton>
      <TaskButton margin="ml-[11px]">
        <svg width="30" height="28" viewBox="0 0 30 28"><rect x="7" width="22" height="28" rx="1.500" fill="#185abd" /><path d="M7 0h22v7H7z" fill="#41a5ee" /><path d="M7 7h22v7H7z" fill="#2b7cd3" /><path d="M7 21h22v7H7z" fill="#103f91" /><rect y="7" width="15" height="14" rx="1" fill="#1649a5" /><text x="7.500" y="18" textAnchor="middle" fill="#fff" className="font-['Open_Sans'] text-[11px] font-bold">W</text></svg>
      </TaskButton>
      <TaskButton margin="ml-[11px]"><PaletteIcon size={30} /></TaskButton>

      <div className="ml-[298px] flex w-[21px] flex-col items-center justify-between border-l border-white bg-[#f0f0f0] py-[5px] pr-[2px]">
        <Chevron d="M1 8l4.500-4.500L10 8" />
        <Chevron d="M1 3l4.500 4.500L10 3" />
      </div>
      <svg className="ml-[21px] mt-[13px]" width="31" height="29" viewBox="0 0 31 29">
        <circle cx="13.500" cy="13.500" r="13" fill="#fff" /><circle cx="13.500" cy="13.500" r="11" fill="#0d96d6" />
        <path d="M9 9c1-5 9-5 9 0 0 3-4 3-4 7" fill="none" stroke="#fff" strokeWidth="3" /><circle cx="14" cy="20.500" r="2" fill="#fff" />
        <circle cx="23" cy="19.500" r="6.300" fill="#f4ae1a" /><path d="M23 18v5M23 15v1.800" stroke="#fff" strokeWidth="2.400" />
      </svg>
      <svg className="ml-[17px] mt-[13px]" width="32" height="24" viewBox="0 0 32 24">
        <defs><linearGradient id="cloud" x1="0" y1="0" x2="0" y2="1"><stop offset="0" stopColor="#7fa8f0" /><stop offset="1" stopColor="#c6d5f8" /></linearGradient></defs>
        <circle cx="23" cy="8" r="7.500" fill="#f5663f" />
        <path d="M7 22C0 22 0 13 6 12c0-8 12-11 16-2 9-1 11 12 2 12z" fill="url(#cloud)" />
      </svg>
      <Label w={37} className="ml-[9px] text-[17px] leading-[50px] text-[#111]">27°C</Label>
      <svg className="ml-[36px] mt-[20px]" width="18" height="10" viewBox="0 0 18 10" fill="none" stroke="#222" strokeWidth="1.400"><path d="M1 9l8-8 8 8" /></svg>
      <svg className="ml-[21px] mt-[15px]" width="20" height="20" viewBox="0 0 20 20"><rect width="20" height="20" rx="2" fill="#3a3a3a" /><rect x="3.500" y="3.500" width="13" height="12" fill="none" stroke="#aaa" strokeWidth="1.500" /><path d="M10 8l5 8" stroke="#fff" strokeWidth="2" /></svg>
      <svg className="ml-[24px] mt-[16px]" width="15" height="18" viewBox="0 0 15 18" fill="none" stroke="#222" strokeWidth="1.200"><path d="M1 4h8v10H1zM9.500 8l4-3v8l-4-3M1.500 1.500c3-1.500 6-1.500 9 0M1.500 16.500c3 1.500 6 1.500 9 0" /></svg>
      <svg className="ml-[20px] mt-[17px]" width="21" height="19" viewBox="0 0 21 19"><path d="M4 14c-5-1-4-7 0-7 1-7 9-8 12-3 2 2 3 3 3 6l-7 4z" fill="#8a8a8a" stroke="#444" /><circle cx="14.500" cy="12.500" r="6" fill="#d6202c" /><path d="M12 10l5 5M17 10l-5 5" stroke="#fff" strokeWidth="1.500" /></svg>
      <svg className="ml-[19px] mt-[17px]" width="21" height="16" viewBox="0 0 21 16"><path d="M6.500 4.500h12v9h-12z" fill="#fff" stroke="#000" /><path d="M8 6h9v6H8z" fill="#000" /><path d="M19.500 8v3M1 4h5v4H1zM2 1v3M5 1v3M3.500 8v4H6" fill="none" stroke="#000" strokeWidth="1.200" /></svg>
      <svg className="ml-[22px] mt-[15px]" width="14" height="20" viewBox="0 0 14 20"><rect x="3" width="8" height="14" rx="1" fill="#000" /><path d="M.700 10v3c0 2 1 3 3 3h6.600c2 0 3-1 3-3v-3M7 16v3M3 19.300h8" fill="none" stroke="#000" strokeWidth="1.200" /></svg>
      <svg className="ml-[26px] mt-[17px]" width="16" height="18" viewBox="0 0 16 18" fill="none" stroke="#333" strokeWidth="1.200"><path d="M1 16C1 7 7 2 15 2M5 16c0-6 4-10 10-10M9 16c0-4 2-6 6-6" /><circle cx="13.500" cy="14.500" r="1.500" fill="#222" stroke="none" /></svg>
      <svg className="ml-[21px] mt-[16px]" width="21" height="19" viewBox="0 0 21 19" fill="none" stroke="#222" strokeWidth="1.200"><path d="M1 6h3l4-4v15l-4-4H1zM11 7c1.500 1.500 1.500 3.500 0 5M13.500 5c3 3 3 6 0 9" /><path d="M16.500 2.500c4 4 4 10 0 14" stroke="#aaa" /></svg>
      <svg className="ml-[24px] mt-[15px]" width="21" height="20" viewBox="0 0 21 20" fill="none" stroke="#222" strokeWidth="1.300"><path d="M6 14L14 2c2-2 4 0 3 2L9 16l-4 2zM9 9c-10 0-10 9-4 9 4 0 6-9 9-9 2 0 0 4 2 4s4-3 4-3M14 2c-3 0-3 3-3 5" /></svg>
      <Label w={28} className="ml-[23px] text-[13.500px] leading-[50px] text-[#222]">ENG</Label>
      <div className="ml-[16px] flex w-[76px] flex-col items-center pt-[2px] text-[14px] leading-[23px] text-[#222]">
        <Label w={34}>13:46</Label>
        <Label w={76}>03-11-2022</Label>
      </div>
      <svg className="ml-[23px] mt-[15px]" width="20" height="20" viewBox="0 0 20 20" fill="none" stroke="#111" strokeWidth="1.200"><path d="M.700.700h18.600v15.300H13L10 19l-3-3H.700z" /></svg>
      <div className="ml-[25px] h-full w-px bg-[#aeb4b6]" />
    </div>
  );
}

/* ------------------------------------------------------------------ */
/* Floating annotation toolbar                                         */
/* ------------------------------------------------------------------ */

const Pen = ({ color }: { color: string }) => (
  <svg width="28" height="32" viewBox="0 0 28 32"><path d="M6 18L19 3c2-2 8 1 6 5L13 24z" fill={color} stroke="#ffe9e2" strokeWidth="1.600" /><path d="M5 19l8 6-4 3-7 3z" fill="#fff" /></svg>
);

const penTools: { bg: string; icon: React.ReactNode }[] = [
  { bg: 'bg-[#1a9aca]', icon: <svg width="40" height="32" viewBox="0 0 40 32"><path d="M3 11c2-3 7-6 8-4 1 3-6 6-5 9s7-5 9-3-5 5-4 8 6-5 8-3-4 4-3 6 3 0 4-1" fill="none" stroke="#fff" strokeWidth="2.400" strokeLinecap="round" /><path d="M26 17L34 3c2-3 7 0 5 3l-8 14z" fill="#fff" /><path d="M25 18l6 3-3 3-5 3z" fill="#fff" stroke="#1a9aca" strokeWidth=".8" /></svg> },
  { bg: 'bg-[#333333]', icon: <Pen color="#ff2a00" /> },
  { bg: 'bg-[#b3b3b3]', icon: <Pen color="#ffa200" /> },
  { bg: 'bg-[#b3b3b3]', icon: <svg width="28" height="28" viewBox="0 0 28 28"><path d="M4 24L24 4" stroke="#fff8c8" strokeWidth="6" strokeLinecap="round" /><path d="M4 24L24 4" stroke="#ffea00" strokeWidth="3.500" strokeLinecap="round" /></svg> },
  { bg: 'bg-[#b3b3b3]', icon: <svg width="26" height="32" viewBox="0 0 26 32" fill="#fff"><path d="M10 17c0-4-3-6-3-10a6 6 0 0 1 12 0c0 4-3 6-3 10z" /><rect y="19" width="26" height="8" rx="1.500" /><path d="M3 28h20v2l-2 2H5l-2-2z" /></svg> },
  { bg: 'bg-[#b3b3b3]', icon: <svg width="26" height="27" viewBox="0 0 26 27" fill="#fff"><path d="M15 0l10 9-13 13L4 14z" /><path d="M3 16l8 7-2 3c-2 1-9-4-9-6z" /></svg> },
  { bg: 'bg-[#b3b3b3]', icon: <svg width="20" height="28" viewBox="0 0 20 28"><path d="M1 0l18 15-6 1 4 8-4 3-4-9-5 4z" fill="#fff" /><path d="M5 7l6 6-4 1z" fill="#b3b3b3" /></svg> },
  { bg: 'bg-[#b3b3b3]', icon: <svg width="30" height="27" viewBox="0 0 30 27"><path d="M8 6V1h14v5" fill="none" stroke="#fff" strokeWidth="2" /><rect y="5" width="30" height="22" rx="2" fill="#fff" /><path d="M1 12h28M10 9h10v7H10z" fill="none" stroke="#b3b3b3" strokeWidth="1.300" /></svg> },
  { bg: 'bg-[#b3b3b3]', icon: <svg width="25" height="20" viewBox="0 0 25 20"><path d="M14 0v6c7 0 11 5 11 14-2-5-6-6-11-6v5L0 10z" fill="#fff" /></svg> },
  { bg: 'bg-[#b3b3b3]', icon: <svg width="25" height="20" viewBox="0 0 25 20"><path d="M11 0v6C4 6 0 11 0 20c2-5 6-6 11-6v5l14-9z" fill="#dadada" /></svg> },
  { bg: 'bg-[#b3b3b3]', icon: <svg width="21" height="28" viewBox="0 0 21 28" fill="#fff"><path d="M6 3V0h9v3l5 1v5H0V4z" /><path d="M1 11h19l-2 15-2 2H5l-2-2z" /></svg> },
  { bg: 'bg-white', icon: <svg width="36" height="36" viewBox="0 0 36 36"><path d="M1.500 1.500h32v32h-32z" fill="none" stroke="#1c1c1c" strokeWidth="3" /><path d="M6 25.500h10v3.500H6z" fill="#1c1c1c" /><path d="M15 15l8 3 12 11-6 6-11-12z" fill="#1c1c1c" stroke="#fff" strokeWidth="1.500" /></svg> },
  { bg: 'bg-white', icon: <svg width="36" height="34" viewBox="0 0 36 34"><path d="M12 31.500H2.500v-30h29V22M17 1.500V20" fill="none" stroke="#1c1c1c" strokeWidth="3" /><path d="M10 20l7 2 8 8-4 4-8-8zM22 20l7 2 8 8-4 4-8-8z" fill="#1c1c1c" stroke="#fff" strokeWidth="1.200" /></svg> },
];

function PenToolbar() {
  return (
    <div className="absolute left-[1856px] top-0 flex w-[60px] flex-col">
      <div className="flex h-[60px] items-center justify-center rounded-t-[30px] bg-[#cdcdcd] pt-[9px]">
        <div className="scale-x-[0.62] font-['Roboto'] text-[24px] font-bold text-[#505050]">IPEVO</div>
      </div>
      <div className="flex flex-col border-2 border-[#b3b3b3] bg-white px-[3px] pb-[2px] pt-[3px]">
        {penTools.map((t, i) => (
          <div key={i} className={`flex h-[50px] items-center justify-center ${t.bg}`}>
            {i === 1 && <div className="-ml-[8px] mt-[36px] h-0 w-0 border-b-[8px] border-r-[8px] border-b-white border-r-transparent" />}
            {t.icon}
          </div>
        ))}
      </div>
      <div className="flex h-[59px] items-center justify-center border-2 border-[#b3b3b3] bg-white">
        <svg width="34" height="29" viewBox="0 0 34 29"><path d="M2 6h8l2-6h11l2 6h7c1 0 2 1 2 2v19c0 1-1 2-2 2H2c-1 0-2-1-2-2V8c0-1 1-2 2-2z" fill="#1c1c1c" /><path d="M8 12h13v11H8zM22 17l4-4v9l-4-3z" fill="#fff" /></svg>
      </div>
      <div className="flex h-[60px] items-center justify-center rounded-b-[30px] bg-[#cdcdcd] pb-[12px]">
        <svg width="22" height="14" viewBox="0 0 22 14" fill="none" stroke="#000" strokeWidth="3"><path d="M1 12.500L11 2.500l10 10" /></svg>
      </div>
    </div>
  );
}

export default function App() {
  return (
    <div className="relative h-[1498px] w-[2744px] overflow-hidden bg-white font-['Open_Sans','Noto_Sans',sans-serif]">
      <div className="flex w-[1920px] flex-col">
        <TitleBar />
        <Tabs />
        <Ribbon />
        <Workspace />
        <HorizontalScroll />
        <StatusBar />
        <Taskbar />
      </div>
      <div className="absolute left-[1916px] top-[39px] h-[6px] w-px bg-[#1f4f86]" />
      <PenToolbar />
    </div>
  );
}
